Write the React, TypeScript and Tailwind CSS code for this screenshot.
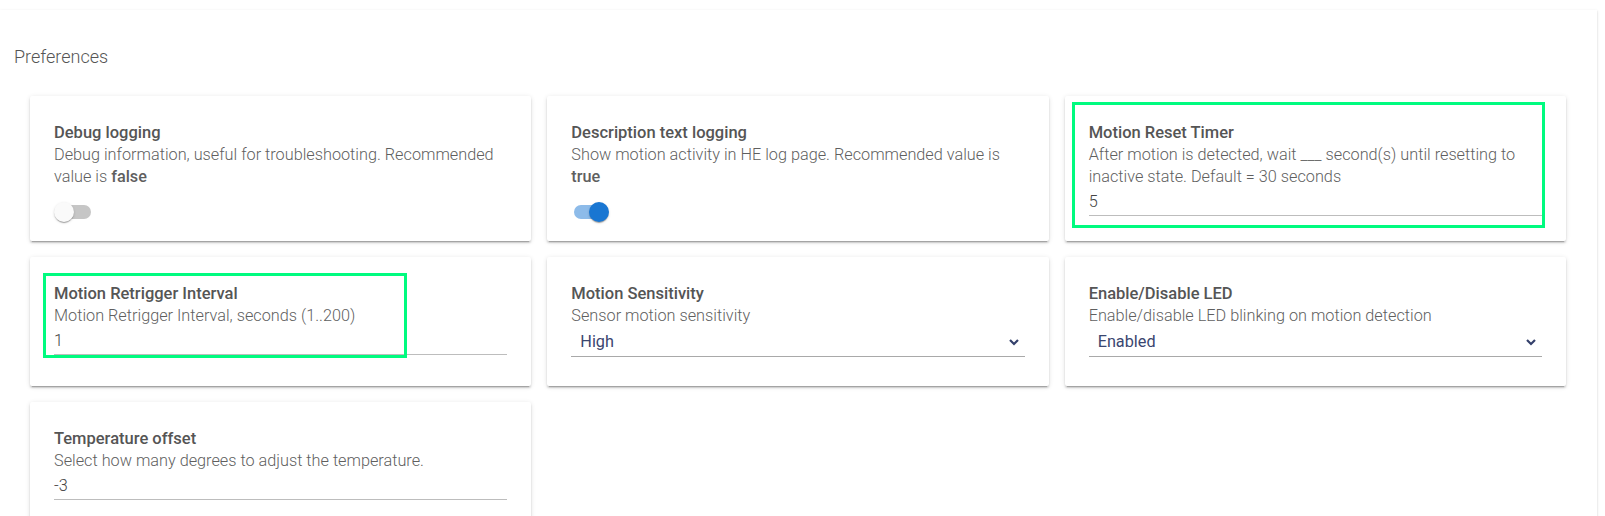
import React from 'react';

type Pref =
  | { kind: 'switch'; title: string; desc: React.ReactNode; on: boolean }
  | { kind: 'input'; title: string; desc: string; value: string; mark?: 'reset' | 'retrigger' }
  | { kind: 'select'; title: string; desc: string; value: string };

const prefs: Pref[] = [
  {
    kind: 'switch',
    title: 'Debug logging',
    desc: (
      <>
        Debug information, useful for troubleshooting. Recommended value is <b className="font-medium">false</b>
      </>
    ),
    on: false,
  },
  {
    kind: 'switch',
    title: 'Description text logging',
    desc: (
      <>
        Show motion activity in HE log page. Recommended value is <b className="font-medium">true</b>
      </>
    ),
    on: true,
  },
  {
    kind: 'input',
    title: 'Motion Reset Timer',
    desc: 'After motion is detected, wait ___ second(s) until resetting to inactive state. Default = 30 seconds',
    value: '5',
    mark: 'reset',
  },
  {
    kind: 'input',
    title: 'Motion Retrigger Interval',
    desc: 'Motion Retrigger Interval, seconds (1..200)',
    value: '1',
    mark: 'retrigger',
  },
  { kind: 'select', title: 'Motion Sensitivity', desc: 'Sensor motion sensitivity', value: 'High' },
  { kind: 'select', title: 'Enable/Disable LED', desc: 'Enable/disable LED blinking on motion detection', value: 'Enabled' },
  {
    kind: 'input',
    title: 'Temperature offset',
    desc: 'Select how many degrees to adjust the temperature.',
    value: '-3',
  },
];

// thumb sits over the track, like a MUI switch
function Toggle({ on }: { on: boolean }) {
  return (
    <div className="relative h-5 w-[40px]">
      <div
        className={`absolute left-[3px] top-[3px] h-[14px] w-[34px] rounded-full ${
          on ? 'bg-[#8dbbe9]' : 'bg-[#c6c6c6]'
        }`}
      />
      <div
        className={`absolute top-0 h-5 w-5 rounded-full shadow-[0_2px_1px_-1px_rgba(0,0,0,0.2),0_1px_1px_0_rgba(0,0,0,0.14),0_1px_3px_0_rgba(0,0,0,0.12)] ${
          on ? 'left-[18px] bg-[#1976d2]' : 'left-0 bg-[#fafafa]'
        }`}
      />
    </div>
  );
}

function Card({ pref }: { pref: Pref }) {
  return (
    <div className="relative rounded-[2px] bg-white px-6 pt-[26px] pb-[22px] shadow-[0_3px_1px_-2px_rgba(0,0,0,0.2),0_2px_2px_0_rgba(0,0,0,0.14),0_1px_5px_0_rgba(0,0,0,0.12)]">
      <div className="text-[16.5px] leading-[22px] font-medium text-[#555]">{pref.title}</div>
      <div className="text-[16.25px] leading-[22px] font-light text-[#5f5f5f]">{pref.desc}</div>

      {pref.kind === 'switch' && (
        <div className="h-[31px] pt-[14px]">
          <Toggle on={pref.on} />
        </div>
      )}

      {pref.kind === 'input' && (
        <div className="border-b border-[#bdbdbd] pt-[3px] pb-[2px] text-[16.25px] leading-[22px] font-light text-[#444]">
          {pref.value}
        </div>
      )}

      {pref.kind === 'select' && (
        <div className="mb-[7px] flex items-center justify-between border-b border-[#a9a9a9] pt-1 pb-[3px] pl-[9px] pr-[5px] text-[16.25px] leading-[22px] text-[#3a4670]">
          <span>{pref.value}</span>
          <svg width="12" height="8" viewBox="0 0 12 8" fill="none" stroke="#34406b" strokeWidth="2.2">
            <path d="M2 2 L6 6 L10 2" />
          </svg>
        </div>
      )}

      {pref.kind === 'input' && pref.mark === 'reset' && (
        <div className="pointer-events-none absolute left-[7px] top-[6px] h-[126px] w-[473px] border-[3px] border-[#00fb7f]" />
      )}
      {pref.kind === 'input' && pref.mark === 'retrigger' && (
        <div className="pointer-events-none absolute left-[13px] top-[16px] h-[85px] w-[364px] border-[3px] border-[#00fb7f]" />
      )}
    </div>
  );
}

export default function App() {
  return (
    <div className="h-[516px] overflow-hidden bg-white pt-[10px] pr-2 font-['Roboto',sans-serif]">
      <div className="min-h-[600px] bg-white shadow-[0_2px_1px_-1px_rgba(0,0,0,0.2),0_1px_1px_0_rgba(0,0,0,0.14),0_1px_3px_0_rgba(0,0,0,0.12)]">
        <div className="pl-[14px] pt-[35px] pb-[27px] text-[18px] leading-6 font-light text-[#555]">Preferences</div>
        <div className="grid grid-cols-3 gap-4 pl-[30px] pr-[31px]">
          {prefs.map((p) => (
            <Card key={p.title} pref={p} />
          ))}
        </div>
      </div>
    </div>
  );
}
